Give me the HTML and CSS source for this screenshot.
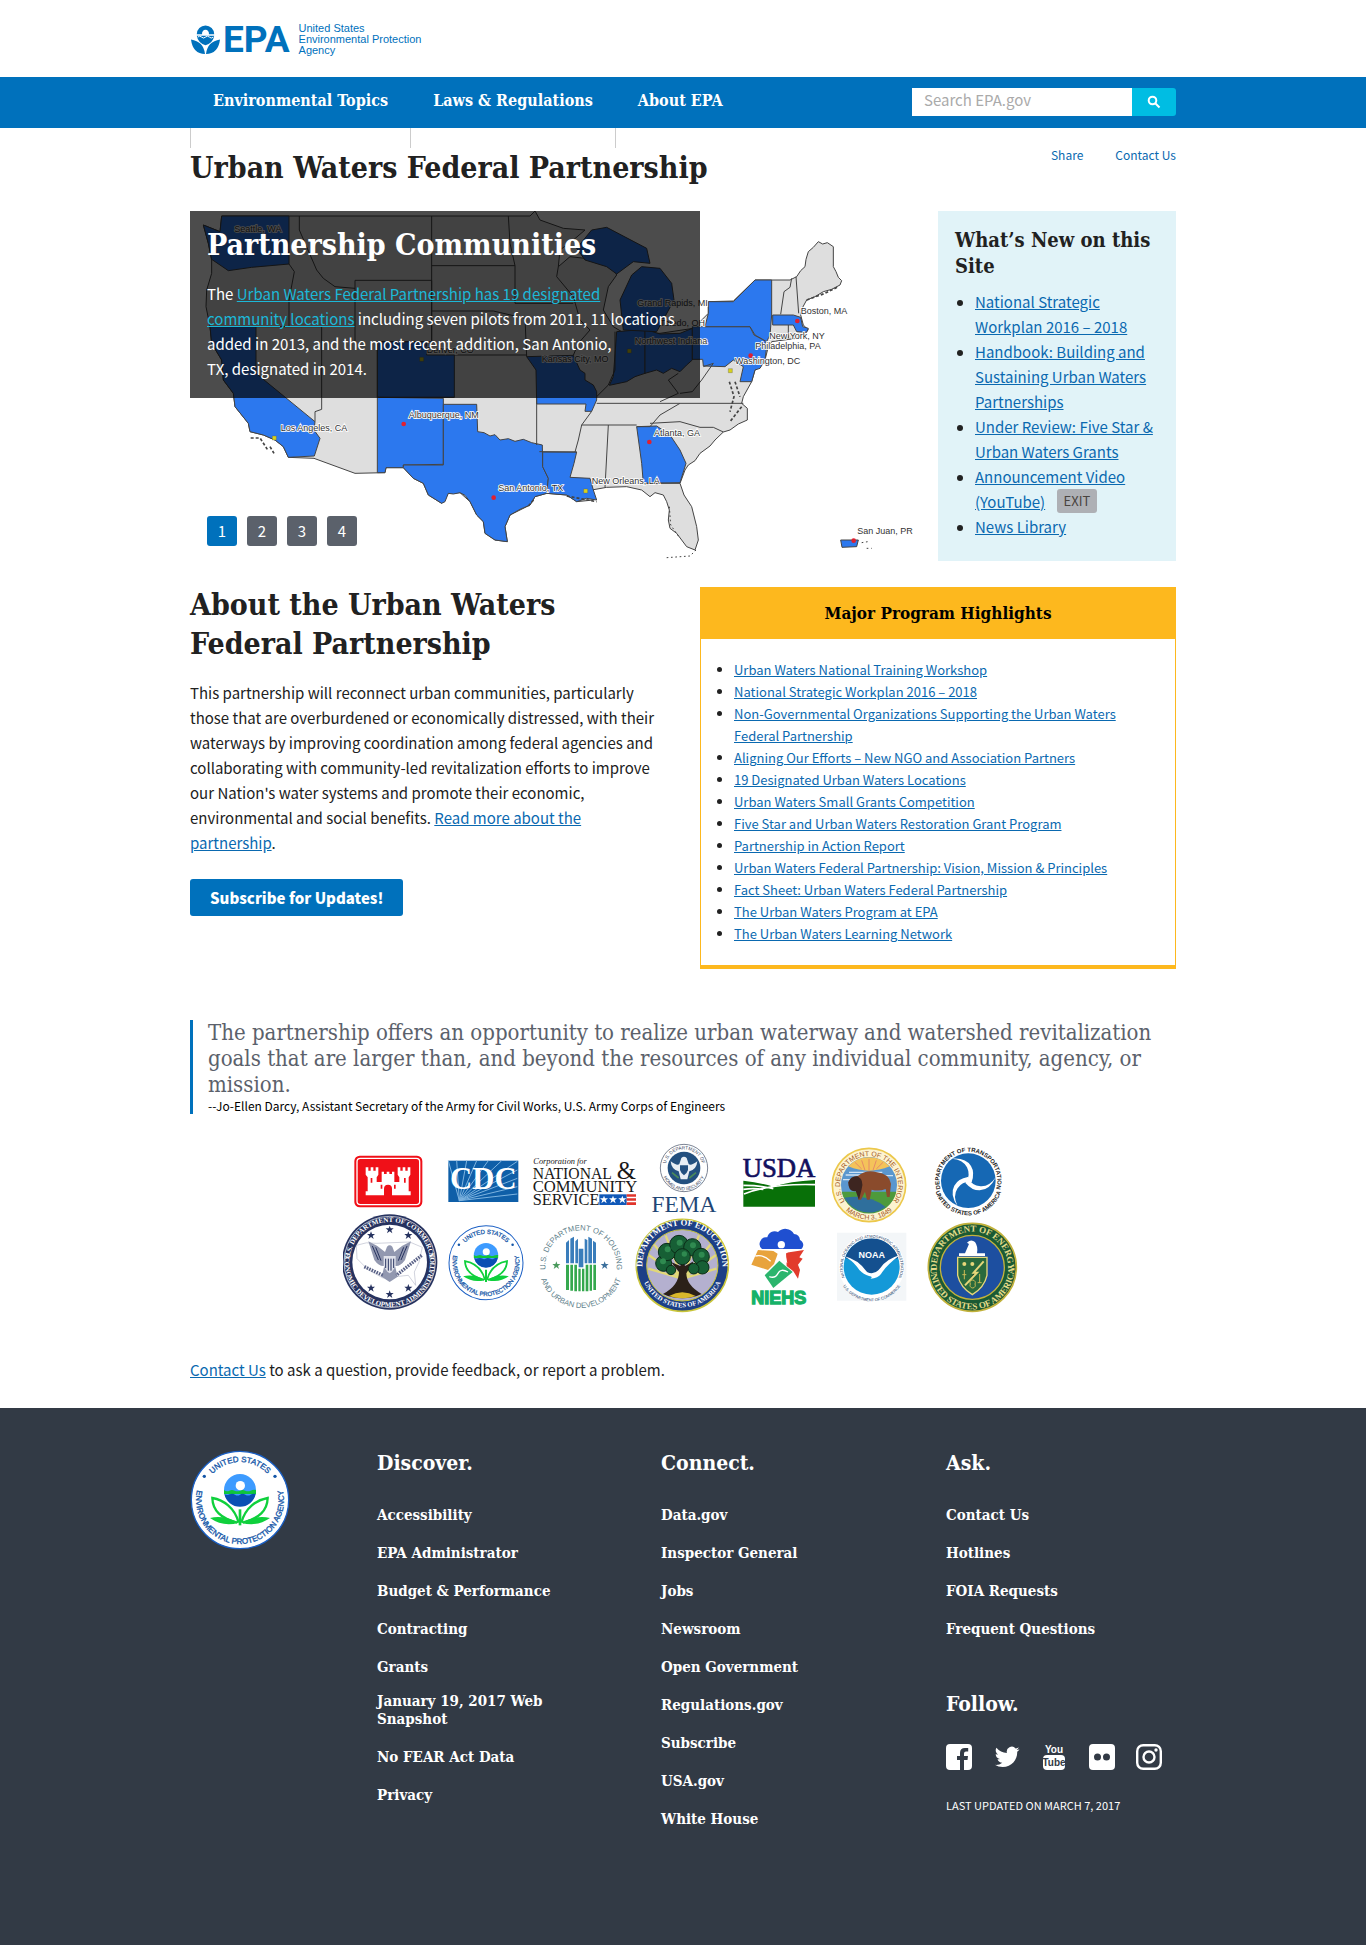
FILE: index.html
```html
<!DOCTYPE html>
<html lang="en">
<head>
<meta charset="utf-8">
<meta name="viewport" content="width=device-width, initial-scale=1">
<title>Urban Waters Federal Partnership | US EPA</title>
<link rel="stylesheet" href="styles.css">
</head>
<body>
<svg class="defs" aria-hidden="true">
  <defs>
    <path id="seal-top" d="M0 114A114 114 0 0 1 0 -114A114 114 0 0 1 0 114"/>
    <path id="seal-bottom" d="M0 -132A132 132 0 0 0 0 132A132 132 0 0 0 0 -132"/>
    <symbol id="epa-seal" viewBox="-150 -150 300 300">
      <circle r="146" fill="#fff" stroke="#1a5fc4" stroke-width="4"/>
      <g font-family="Liberation Sans, sans-serif" font-size="24" fill="#1456a8" stroke="#1456a8" stroke-width="1" text-anchor="middle">
        <text><textPath href="#seal-top" startOffset="50%">UNITED STATES</textPath></text>
        <text><textPath href="#seal-bottom" startOffset="50%">ENVIRONMENTAL PROTECTION AGENCY</textPath></text>
      </g>
      <circle cx="-107" cy="-71" r="5" fill="#1456a8"/><circle cx="105" cy="-71" r="5" fill="#1456a8"/>
      <circle cy="-30" r="48" fill="#3d9bff"/>
      <path d="M-48 -30q8 6 16 2t16 0 16 0 16 0 16 0 16 -2v12H-48z" fill="#0fc43c"/>
      <path d="M-47 -18q8 5 16 1t16 1 15 0 16 0 16 0 15 -2A48 48 0 0 1 -47 -18z" fill="#0a4fb3"/>
      <circle cx="1" cy="-43" r="14" fill="#fff"/>
      <path d="M0 28V76" stroke="#0fd03c" stroke-width="8"/>
      <path d="M-4 68C-16 22 -50 0 -83 -6C-82 32 -58 54 -8 68M4 68C16 22 50 0 83 -6C82 32 58 54 8 68" fill="none" stroke="#0fd03c" stroke-width="7"/>
      <path d="M-90 54Q-50 44 -4 68Q-50 82 -90 54zM90 54Q50 44 4 68Q50 82 90 54z" fill="#0fd03c"/>
    </symbol>
  </defs>
</svg>

<header class="masthead">
  <div class="wrap">
    <a class="brand" href="#" aria-label="US EPA">
      <svg class="brand-mark" viewBox="0 0 30 32" aria-hidden="true">
        <path d="M6 10.500A9 9 0 0 1 24 10.500H18.500A3.600 3.600 0 1 0 11.500 10.500z"/>
        <path d="M6 12h18q-1 7 -9 10q-8 -3 -9 -10z"/>
        <path d="M7 13.500q2 -2 4 0t4 0 4 0 4 0" fill="none" stroke="#fff" stroke-width="1"/>
        <path d="M0 16Q13 18 14.500 31Q2 31 0 16zM30 16Q17 18 15.500 31Q28 31 30 16z"/>
      </svg>
      <span class="brand-name">EPA</span>
      <span class="brand-full">United States<br>Environmental Protection<br>Agency</span>
    </a>
  </div>
</header>

<nav class="nav" aria-label="Main">
  <div class="wrap nav-row">
    <ul class="nav-list">
      <li><a href="#">Environmental Topics</a></li>
      <li><a href="#">Laws &amp; Regulations</a></li>
      <li><a href="#">About EPA</a></li>
    </ul>
    <form class="search">
      <input class="search-box" type="search" placeholder="Search EPA.gov" aria-label="Search EPA.gov">
      <button class="search-button" type="button" aria-label="Search">
        <svg viewBox="0 0 14 14" aria-hidden="true"><circle cx="5.500" cy="5.500" r="3.800"/><path d="M8.500 8.500L12.500 12.500"/></svg>
      </button>
    </form>
  </div>
</nav>

<main class="wrap">
  <div class="title-row">
    <h1>Urban Waters Federal Partnership</h1>
    <ul class="page-links">
      <li><a href="#">Share</a></li>
      <li><a href="#">Contact Us</a></li>
    </ul>
  </div>

  <div class="top-grid">
    <section class="hero">
      <svg class="map" viewBox="30 33 2172 1050" role="img" aria-label="Map of partnership communities">
        <g stroke="#444" stroke-width="3" stroke-linejoin="round">
          <path fill="#dedede" d="M70 75L120 95 125 48H1050L1065 33 1080 60 1150 85 1215 90 1180 120 1140 150 1135 200 1170 170 1215 175 1300 200 1310 225 1285 260 1270 330 1300 380 1325 395 1440 400 1540 385 1585 340 1585 305 1660 303 1725 240H1830L1850 230 1862 212 1875 200 1878 178 1885 155 1900 142 1915 125 1928 132 1942 128 1960 140V200L1968 215 1975 232 1985 242 1980 255 1955 268 1930 275 1905 290 1880 300 1868 322 1862 345 1870 375 1885 390 1850 415 1775 425 1765 440 1755 480 1725 510 1715 545 1690 590 1685 610 1702 625 1702 660 1675 672 1650 690 1630 696 1605 720 1590 738 1560 760 1545 782 1525 795 1515 810 1500 850 1512 885 1535 920 1550 980 1555 1020 1545 1050 1520 1040 1505 1020 1490 1000 1470 985 1465 960 1468 930 1460 905 1450 885 1425 878 1410 890 1385 870 1340 860 1280 862 1235 870 1240 900 1190 905 1160 885 1100 880 1065 890 1050 915 990 945 975 980 982 1025 945 1020 915 1000 910 965 890 945 870 905 840 878 805 880 785 910 745 885 730 850 700 835 670 803H618L615 818 525 820 402 775 325 772 310 740 285 720 250 705 210 695 205 670 165 620 160 580 130 540 125 480 95 430 90 380 78 320 80 270 95 220V180L85 130z"/>
          <g fill="#2c78ee">
            <path d="M70 75L120 95 125 48H327V192L215 202 145 212 95 178 85 130z"/>
            <path d="M90 380H228V520L405 665 402 690 420 715 403 768 325 772 310 740 285 720 250 705 210 695 205 670 165 620 160 580 130 540 125 480 95 430z"/>
            <path d="M592 425H740V465H823V592H592z"/>
            <path d="M592 592L790 595V793L670 795V803H618L615 818H592z"/>
            <path d="M790 613H890L893 695 912 698 930 708 945 704 960 720 985 716 1005 724 1030 718 1055 728 1087 735 1088 800 1105 835 1100 880 1065 890 1050 915 1020 928 990 945 975 980 982 1025 945 1020 915 1000 910 965 890 945 870 905 855 886 840 878 820 882 805 880 795 905 785 910 745 885 730 850 700 835 670 803V795H790z"/>
            <path d="M1040 470L1180 466 1200 510 1215 520 1215 540 1240 555 1250 575V600L1235 634H1215L1218 612H1070L1068 510z"/>
            <path d="M1088 756H1190L1182 790 1170 832 1230 835 1240 870 1250 900 1220 895 1190 905 1160 885 1100 880 1105 835 1088 800z"/>
            <path d="M1310 395L1395 388V520L1365 530 1340 545 1288 556 1300 530z"/>
            <path d="M1395 388L1440 402 1500 400 1537 385V480L1520 495 1500 515 1475 505 1450 520 1430 510 1395 520z"/>
            <path d="M1537 380H1710L1722 405 1755 422 1760 440 1755 480 1740 505 1725 510 1715 545 1680 545 1690 500 1660 480 1635 500 1570 498 1568 478H1537z"/>
            <path d="M1330 390L1320 300 1355 225 1385 200 1440 205 1475 250 1482 300 1455 350 1430 395z"/>
            <path d="M1190 145L1235 90 1280 82 1400 145 1410 190 1360 185 1310 222 1280 200 1215 180z"/>
            <path d="M1585 340V305H1660L1725 240H1775V345L1770 405 1760 425 1725 405 1710 380H1575z"/>
            <path d="M1778 345H1840L1862 352 1868 380 1885 385 1880 397 1850 395 1840 375H1778z"/>
            <path d="M1370 680L1430 678 1470 705 1500 750 1518 790 1500 848 1390 850 1385 790z"/>
            <path d="M1982 1020H2035L2030 1040 1986 1042z"/>
          </g>
          <path fill="none" d="M358 48V90L410 210 430 235 465 260 525 265M327 192L343 215 327 300V380H228M327 380H425V592M425 592V628L405 635V665M525 241H755V425H592M525 241V425M755 48V425M755 197H1005M755 333H940L1035 355 1040 470M823 465H1040M592 425V592M592 592H823M985 48L990 130 1005 197V310H1180M1135 200L1130 230 1180 290 1200 360 1230 390 1195 430 1180 466M1305 395V510L1285 555 1250 590M1070 592V735M1078 755L1190 756M1235 634L1205 675 1195 720 1185 756M1205 675H1370M1285 675L1275 862M1250 610H1690M1370 680H1410L1440 645 1500 610M1410 670L1500 665 1560 682 1600 682 1630 696M1495 520L1465 540 1495 580 1440 605M1537 575L1500 580M1570 500L1600 490 1565 540 1537 575M1390 850H1500M1835 235L1830 262 1812 275 1802 343M1848 230L1856 340M1825 375V415"/>
          <path fill="none" stroke-width="5" stroke-dasharray="9 6" d="M212 714H240L262 748M270 740L282 760M1648 545L1662 590 1650 635M1665 545L1680 590M1685 620L1650 665M1880 300L1935 280 1975 260M1160 888L1250 905M1045 918L1064 896"/>
          <path fill="none" stroke-dasharray="5 8" d="M1468 920L1472 975 1500 1015M1460 1073L1530 1068 1548 1050M2045 1028L2070 1024M2060 1045H2075"/>
        </g>
        <g fill="#e02030"><circle cx="671" cy="672" r="7"/><circle cx="941" cy="893" r="7"/><circle cx="1408" cy="726" r="7"/><circle cx="1852" cy="363" r="7"/><circle cx="1712" cy="467" r="7"/><circle cx="2021" cy="1022" r="7"/></g>
        <g fill="#d8d21c" stroke="#555"><path d="M277 708h12v12h-12zM1211 867h12v12h-12zM1645 506h12v12h-12zM719 472h12v12h-12zM1342 447h12v12h-12z"/></g>
        <g class="map-labels">
          <text x="163" y="96">Seattle, WA</text>
          <text x="302" y="692">Los Angeles, CA</text>
          <text x="686" y="653">Albuquerque, NM</text>
          <text x="740" y="458">Denver, CO</text>
          <text x="955" y="873">San Antonio, TX</text>
          <text x="1085" y="486">Kansas City, MO</text>
          <text x="1235" y="853">New Orleans, LA</text>
          <text x="1422" y="708">Atlanta, GA</text>
          <text x="1372" y="318">Grand Rapids, MI</text>
          <text x="1440" y="377">Toledo, OH</text>
          <text x="1364" y="433">Northwest Indiana</text>
          <text x="1862" y="343">Boston, MA</text>
          <text x="1768" y="417">New York, NY</text>
          <text x="1726" y="448">Philadelphia, PA</text>
          <text x="1665" y="492">Washington, DC</text>
          <text x="2032" y="1002">San Juan, PR</text>
        </g>
      </svg>
      <div class="hero-text">
        <h2>Partnership Communities</h2>
        <p>The <a href="#">Urban Waters Federal Partnership has 19 designated community locations</a> including seven pilots from 2011, 11 locations added in 2013, and the most recent addition, San Antonio, TX,&nbsp;designated in 2014.</p>
      </div>
      <div class="pager">
        <button class="is-current" type="button">1</button>
        <button type="button">2</button>
        <button type="button">3</button>
        <button type="button">4</button>
      </div>
    </section>

    <aside class="news">
      <h3>What’s New on this Site</h3>
      <ul>
        <li><a href="#">National Strategic Workplan 2016 – 2018</a></li>
        <li><a href="#">Handbook: Building and Sustaining Urban Waters Partnerships</a></li>
        <li><a href="#">Under Review: Five Star &amp; Urban Waters Grants</a></li>
        <li><a href="#">Announcement Video (YouTube)</a> <a class="exit" href="#">EXIT</a></li>
        <li><a href="#">News Library</a></li>
      </ul>
    </aside>
  </div>

  <div class="mid-grid">
    <section class="about">
      <h2>About the Urban Waters Federal Partnership</h2>
      <p>This partnership will reconnect urban communities, particularly those that are overburdened or economically distressed, with their waterways by improving coordination among federal agencies and collaborating with community-led revitalization efforts to improve our Nation's water systems and promote their economic, environmental and social benefits. <a href="#">Read more about the partnership</a>.</p>
      <button class="subscribe" type="button">Subscribe for Updates!</button>
    </section>

    <section class="highlights">
      <h2>Major Program Highlights</h2>
      <ul>
        <li><a href="#">Urban Waters National Training Workshop</a></li>
        <li><a href="#">National Strategic Workplan 2016 – 2018</a></li>
        <li><a href="#">Non-Governmental Organizations Supporting the Urban Waters Federal Partnership</a></li>
        <li><a href="#">Aligning Our Efforts – New NGO and Association Partners</a></li>
        <li><a href="#">19 Designated Urban Waters Locations</a></li>
        <li><a href="#">Urban Waters Small Grants Competition</a></li>
        <li><a href="#">Five Star and Urban Waters Restoration Grant Program</a></li>
        <li><a href="#">Partnership in Action Report</a></li>
        <li><a href="#">Urban Waters Federal Partnership: Vision, Mission &amp; Principles</a></li>
        <li><a href="#">Fact Sheet: Urban Waters Federal Partnership</a></li>
        <li><a href="#">The Urban Waters Program at EPA</a></li>
        <li><a href="#">The Urban Waters Learning Network</a></li>
      </ul>
    </section>
  </div>

  <blockquote class="quote">
    <p>The partnership offers an opportunity to realize urban waterway and watershed revitalization goals that are larger than, and beyond the resources of any individual community, agency, or mission.</p>
    <cite>--Jo-Ellen Darcy, Assistant Secretary of the Army for Civil Works, U.S. Army Corps of Engineers</cite>
  </blockquote>

  <svg class="partners" viewBox="39 30 2040 520" role="img" aria-label="Federal partner agencies">
    <defs>
      <path id="b112" d="M0 -112A112 112 0 0 0 0 112A112 112 0 0 0 0 -112"/>
      <path id="t120" d="M0 120A120 120 0 0 1 0 -120A120 120 0 0 1 0 120"/>
      <path id="b135" d="M0 -135A135 135 0 0 0 0 135A135 135 0 0 0 0 -135"/>
      <path id="t107" d="M0 107A107 107 0 0 1 0 -107A107 107 0 0 1 0 107"/>
      <path id="b126" d="M0 -126A126 126 0 0 0 0 126A126 126 0 0 0 0 -126"/>
      <path id="t87" d="M0 87A87 87 0 0 1 0 -87A87 87 0 0 1 0 87"/>
      <path id="b104" d="M0 -104A104 104 0 0 0 0 104A104 104 0 0 0 0 -104"/>
      <path id="t56" d="M0 56A56 56 0 0 1 0 -56A56 56 0 0 1 0 56"/>
      <path id="b67" d="M0 -67A67 67 0 0 0 0 67A67 67 0 0 0 0 -67"/>
      <path id="star" d="M0 -12L3 -4 12 -4 5 2 8 11 0 5 -8 11 -5 2 -12 -4 -3 -4z"/>
    </defs>

    <!-- Army Corps of Engineers -->
    <rect x="73" y="77" width="204" height="155" rx="16" fill="#f01018"/>
    <rect x="81" y="85" width="188" height="139" rx="10" fill="none" stroke="#fff" stroke-width="4"/>
    <path fill="#fff" d="M107 112h8v10h7v-10h8v10h7v-10h8v22l-5 8v14h15v-31h7v7h8v-7h8v7h8v-7h7v31h15v-14l-5 -8v-22h8v10h7v-10h8v10h7v-10h8v22l-5 8v42h6v12H186v-20a12 12 0 0 0 -24 0v20H107v-12h6v-42l-6 -8z"/>
    <path fill="#f01018" d="M122 144h5v14h-5zM222 144h5v14h-5zM152 164h5v12h-5zM192 164h5v12h-5z"/>

    <!-- CDC -->
    <rect x="355" y="92" width="210" height="124" fill="#0f5fa8"/>
    <path stroke="#7db4e0" stroke-width="3" d="M388 212L355 92M388 212L380 92M388 212L410 92M388 212L440 92M388 212L475 92M388 212L515 92M388 212L562 94M388 212L562 120M388 212L562 145M388 212L562 170M388 212L562 192"/>
    <text x="460" y="178" text-anchor="middle" font-family="Liberation Serif, serif" font-weight="bold" font-size="92" fill="#fff">CDC</text>

    <!-- National and Community Service -->
    <g font-family="Liberation Serif, serif" fill="#181818">
      <text x="610" y="103" font-size="25" font-style="italic">Corporation for</text>
      <text x="608" y="146" font-size="47">NATIONAL</text>
      <text x="860" y="146" font-size="74">&amp;</text>
      <text x="608" y="186" font-size="50">COMMUNITY</text>
      <text x="608" y="225" font-size="49">SERVICE</text>
    </g>
    <path fill="#1058b8" d="M808 193h82v32h-82z"/><path fill="#e0342b" d="M890 193h28v7h-28zM890 205h28v7h-28zM890 217h28v8h-28z"/>
    <g fill="#fff"><use href="#star" x="822" y="209"/><use href="#star" x="849" y="209"/><use href="#star" x="877" y="209"/></g>

    <!-- FEMA -->
    <g transform="translate(1062 114)">
      <circle r="71" fill="#fff" stroke="#7b8494" stroke-width="3"/>
      <g font-family="Liberation Sans, sans-serif" font-size="14" fill="#3a4660" text-anchor="middle">
        <text><textPath href="#t56" startOffset="50%">U.S. DEPARTMENT OF</textPath></text>
        <text><textPath href="#b67" startOffset="50%">HOMELAND SECURITY</textPath></text>
      </g>
      <circle r="49" fill="#23507f"/>
      <path fill="#e8eef4" d="M-40 -20Q-20 -5 -14 -12L-8 -30Q0 -38 8 -30L14 -12Q20 -5 40 -20Q38 5 16 10L10 34H-10L-16 10Q-38 5 -40 -20z"/>
      <path fill="#23507f" d="M-12 -8h24v14q-4 12 -12 16q-8 -4 -12 -16z"/>
      <path stroke="#4a8a5a" stroke-width="5" d="M-36 14L-16 30M36 14L16 30"/>
    </g>
    <text x="1062" y="245" text-anchor="middle" font-family="Liberation Serif, serif" font-size="70" fill="#1f4675">FEMA</text>

    <!-- USDA -->
    <text x="1347" y="142" text-anchor="middle" font-family="Liberation Serif, serif" font-size="80" stroke="#12105e" stroke-width="2" fill="#12105e">USDA</text>
    <path fill="#087008" d="M1240 152Q1290 158 1330 170Q1380 154 1455 150V230H1240z"/>
    <path fill="none" stroke="#fff" stroke-width="5" d="M1240 166Q1290 166 1330 176M1242 192Q1320 160 1455 164M1240 178Q1270 174 1300 178"/>

    <!-- Department of the Interior -->
    <g transform="translate(1617 165)">
      <circle r="110" fill="#fdf3d0" stroke="#ecc84c" stroke-width="5"/>
      <circle r="84" fill="#5a97cf"/>
      <path fill="#f4c35a" d="M-62 -56A84 84 0 0 1 62 -56Q0 -30 -62 -56z"/>
      <path stroke="#e58b66" stroke-width="3" d="M0 -42V-78M-12 -44L-22 -74M12 -44L22 -74M-22 -48L-42 -68M22 -48L42 -68"/>
      <path stroke="#cfe2f3" stroke-width="4" d="M-70 -30H-20M-60 -38H40M20 -28H72M-78 -16H-50"/>
      <path fill="#4e9a3c" d="M-82 20H82A84 84 0 0 1 -82 20z"/>
      <path fill="#2f6f9c" d="M-74 38Q0 26 50 66A84 84 0 0 1 -74 38z"/>
      <path fill="#8a4b2c" d="M-62 -8Q-54 -28 -34 -26Q-8 -48 24 -38Q60 -34 66 -4L62 36H54L50 12Q30 20 8 14L2 44H-6L-12 20L-24 44H-32L-36 18Q-60 22 -62 -8z"/>
      <path fill="#3d2520" d="M-62 -8Q-54 -28 -34 -26Q-14 -14 -22 12L-30 44L-40 18Q-62 22 -62 -8z"/>
      <g font-family="Liberation Sans, sans-serif" font-size="21" fill="#a2581f" text-anchor="middle">
        <text><textPath href="#t87" startOffset="50%">U.S. DEPARTMENT OF THE INTERIOR</textPath></text>
        <text><textPath href="#b104" startOffset="50%">MARCH 3, 1849</textPath></text>
      </g>
    </g>

    <!-- Department of Transportation -->
    <g transform="translate(1915 152)">
      <circle r="82" fill="#1668b4"/>
      <g id="blade" fill="#fff"><path d="M-8 8Q8 -16 -4 -40Q-16 -64 -50 -66Q-8 -70 8 -44Q20 -24 10 4z"/></g>
      <use href="#blade" transform="rotate(120)"/><use href="#blade" transform="rotate(240)"/>
      <g font-family="Liberation Sans, sans-serif" font-weight="bold" font-size="18" fill="#222" text-anchor="middle">
        <text><textPath href="#t87" startOffset="50%">DEPARTMENT OF TRANSPORTATION</textPath></text>
        <text><textPath href="#b104" startOffset="50%">UNITED STATES OF AMERICA</textPath></text>
      </g>
    </g>

    <!-- Economic Development Administration -->
    <g transform="translate(179 396)">
      <circle r="143" fill="#26325f"/><circle r="137" fill="none" stroke="#fff" stroke-width="2"/>
      <circle r="112" fill="#fff"/>
      <g font-family="Liberation Serif, serif" font-weight="bold" font-size="21" fill="#fff" text-anchor="middle">
        <text><textPath href="#t120" startOffset="50%">U.S. DEPARTMENT OF COMMERCE</textPath></text>
        <text><textPath href="#b135" startOffset="50%">ECONOMIC DEVELOPMENT ADMINISTRATION</textPath></text>
      </g>
      <path fill="none" stroke="#b9bccb" stroke-width="2" d="M-100 -50Q-70 -62 -40 -56L60 -60 98 -44 88 0 74 30 78 70 56 40 -20 48 -64 24 -98 -10z"/>
      <path fill="#9298b0" d="M-64 -62L-46 -6Q-32 14 -16 12L-24 44L0 60L24 44L16 12Q32 14 46 -6L64 -62Q36 -50 14 -30L8 -46Q0 -54 -8 -46L-14 -30Q-36 -50 -64 -62z"/>
      <path fill="#dfe1ea" d="M-18 -18h36v28q-6 18 -18 24q-12 -6 -18 -24z"/>
      <path stroke="#26325f" stroke-width="3" d="M-12 -10V18M-4 -10V26M4 -10V26M12 -10V18M-52 -48L-34 -6M-42 -44L-26 -4M52 -48L34 -6M42 -44L26 -4"/>
      <path stroke="#5b6388" stroke-width="10" stroke-dasharray="5 3" d="M-76 14L-20 40M96 -20L20 40"/>
      <g fill="#26325f"><use href="#star" y="-97"/><use href="#star" x="-56" y="-80"/><use href="#star" x="56" y="-80"/><use href="#star" x="-56" y="78"/><use href="#star" x="56" y="78"/><use href="#star" y="97"/></g>
    </g>

    <!-- EPA -->
    <use href="#epa-seal" x="354" y="284" width="228" height="228"/>

    <!-- Housing and Urban Development -->
    <g transform="translate(753 408)">
      <g font-family="Liberation Sans, sans-serif" font-size="23" fill="#5f7f8c" text-anchor="middle">
        <text><textPath href="#t107" startOffset="50%">U.S. DEPARTMENT OF HOUSING</textPath></text>
        <text><textPath href="#b126" startOffset="50%">AND URBAN DEVELOPMENT</textPath></text>
      </g>
      <path fill="#3a7dbb" d="M-45 -70l9 -8V-8h-9zM-32 -82l11 -6V-8h-11zM-17 -74l8 -8V-8h-8zM-7 -52h14V4H-7zM11 -82l8 4V-8h-8zM22 -88l11 6V-8H22zM36 -76l9 6V-8h-9z"/>
      <path fill="#35a84e" d="M-45 -4h9v76h-9zM-32 -4h8v78h-8zM-20 -4h8v80h-8zM-8 8h7v68h-7zM3 8h7v68H3zM14 -4h8v80h-8zM26 -4h7v78h-7zM37 -4h8v76h-8z"/>
      <use href="#star" x="-74" y="-2" fill="#4a9a5c"/><use href="#star" x="71" y="-2" fill="#3c6f9c"/>
    </g>

    <!-- Department of Education -->
    <g transform="translate(1057 406)">
      <circle r="138" fill="#1d3f86" stroke="#c9c53a" stroke-width="5"/>
      <circle r="107" fill="#b4b0cf" stroke="#c9c53a" stroke-width="3"/>
      <path stroke="#e2d878" stroke-width="7" d="M0 40L-100 -30M0 40L-84 -62M0 40L-50 -90M0 40L50 -90M0 40L84 -62M0 40L100 -30M0 40L-102 10M0 40L102 10"/>
      <path fill="#2b2018" d="M-58 86Q-10 60 -10 20L-34 -10 -6 2 0 -30 8 2 34 -12 12 24Q12 60 58 86Q0 112 -58 86z"/>
      <g fill="#175f35" stroke="#0b2b18" stroke-width="3"><circle cx="-56" cy="-6" r="24"/><circle cx="-46" cy="-40" r="26"/><circle cx="-10" cy="-62" r="28"/><circle cx="30" cy="-54" r="26"/><circle cx="56" cy="-26" r="25"/><circle cx="60" cy="6" r="20"/><circle cx="0" cy="-26" r="24"/><circle cx="-34" cy="14" r="14"/><circle cx="34" cy="10" r="16"/></g>
      <g fill="#2f8a50"><circle cx="-58" cy="-12" r="9"/><circle cx="-44" cy="-48" r="9"/><circle cx="-8" cy="-68" r="9"/><circle cx="32" cy="-60" r="9"/><circle cx="58" cy="-32" r="9"/><circle cx="6" cy="-34" r="8"/></g>
      <path fill="#d9b72c" d="M-40 92Q0 70 40 92Q0 106 -40 92z"/>
      <g font-family="Liberation Serif, serif" font-weight="bold" fill="#fff" text-anchor="middle">
        <text font-size="26"><textPath href="#t120" startOffset="50%">DEPARTMENT OF EDUCATION</textPath></text>
        <text font-size="20"><textPath href="#b126" startOffset="50%">UNITED STATES OF AMERICA</textPath></text>
      </g>
    </g>

    <!-- NIEHS -->
    <path fill="#1f4fd0" d="M1296 357A20 20 0 0 1 1312 322A22 22 0 0 1 1344 306A30 30 0 0 1 1392 312A20 20 0 0 1 1410 330A16 16 0 0 1 1414 357z"/>
    <path fill="#e8a33c" d="M1284 360L1346 364L1332 402L1314 420L1264 404z"/>
    <path fill="#e23b2c" d="M1368 368L1422 360L1408 382 1418 386 1404 404 1410 420 1404 446 1390 424 1370 408z"/>
    <path fill="#2bb56d" d="M1304 436L1348 392 1388 426 1330 474z"/>
    <path fill="none" stroke="#fff" stroke-width="4" d="M1276 378Q1300 372 1322 394M1318 440Q1336 446 1344 430T1374 426"/>
    <circle cx="1354" cy="344" r="11" fill="#fff"/><path fill="#fff" d="M1322 358H1386L1366 372 1372 400 1354 384 1338 400 1344 372z"/>
    <text x="1346" y="523" text-anchor="middle" font-family="Liberation Sans, sans-serif" font-weight="bold" font-size="54" stroke="#16b268" stroke-width="4" fill="#16b268">NIEHS</text>

    <!-- NOAA -->
    <g transform="translate(1625 410)">
      <path fill="#f3f6f8" d="M-104 -102H104V102H-104z"/>
      <circle r="98" fill="#fff"/>
      <circle r="84" fill="#1499d8"/>
      <path fill="#14508f" d="M-80 -26A84 84 0 0 1 80 -26Q44 -18 12 24Q-4 30 -20 20Q-44 -18 -80 -26z"/>
      <path fill="#fff" d="M-84 -32Q-40 -22 -14 16Q8 28 26 4Q46 -24 84 -34Q44 -4 28 22Q20 34 -4 36Q6 30 -8 28Q-30 22 -44 0Q-60 -20 -84 -32z"/>
      <text y="-27" text-anchor="middle" font-family="Liberation Sans, sans-serif" font-weight="bold" font-size="27" fill="#fff">NOAA</text>
      <g font-family="Liberation Sans, sans-serif" font-size="12" fill="#22406a" text-anchor="middle">
        <text><textPath href="#t87" startOffset="50%">NATIONAL OCEANIC AND ATMOSPHERIC ADMINISTRATION</textPath></text>
        <text><textPath href="#b104" startOffset="50%">U.S. DEPARTMENT OF COMMERCE</textPath></text>
      </g>
    </g>

    <!-- Department of Energy -->
    <g transform="translate(1927 412)">
      <circle r="132" fill="#1a5a34" stroke="#c2b23c" stroke-width="5"/>
      <circle r="96" fill="#1d4fa0" stroke="#c2b23c" stroke-width="4"/>
      <path fill="#2a6a3c" stroke="#e6d67a" stroke-width="4" d="M-44 -30H44V24Q36 60 0 82Q-36 60 -44 24z"/>
      <path fill="#fff" d="M-40 -34H38V-42H14Q18 -62 8 -76Q-4 -86 -16 -74L-10 -70L-22 -42H-40z"/>
      <path stroke="#e6d67a" stroke-width="6" d="M34 -18L4 16H14L-22 54"/>
      <path fill="none" stroke="#cdbb55" stroke-width="3" d="M-24 8V36M-30 22H-18M22 20V46M16 46H28M-6 50A8 8 0 1 0 8 50A8 8 0 1 0 -6 50"/>
      <circle cx="-24" cy="-10" r="6" fill="#e6d67a"/><circle cx="0" cy="-10" r="6" fill="#e6d67a"/>
      <g font-family="Liberation Serif, serif" font-weight="bold" font-size="27" fill="#e6dc8a" text-anchor="middle">
        <text><textPath href="#t107" startOffset="50%">DEPARTMENT OF ENERGY</textPath></text>
        <text><textPath href="#b126" startOffset="50%">UNITED STATES OF AMERICA</textPath></text>
      </g>
    </g>
  </svg>

  <p class="contact"><a href="#">Contact Us</a> to ask a question, provide feedback, or report a problem.</p>
</main>

<footer class="footer">
  <div class="wrap footer-grid">
    <svg class="footer-seal" viewBox="0 0 300 300" role="img" aria-label="United States Environmental Protection Agency"><use href="#epa-seal" width="300" height="300"/></svg>
    <section>
      <h2>Discover.</h2>
      <ul>
        <li><a href="#">Accessibility</a></li>
        <li><a href="#">EPA Administrator</a></li>
        <li><a href="#">Budget &amp; Performance</a></li>
        <li><a href="#">Contracting</a></li>
        <li><a href="#">Grants</a></li>
        <li><a href="#">January 19, 2017 Web Snapshot</a></li>
        <li><a href="#">No FEAR Act Data</a></li>
        <li><a href="#">Privacy</a></li>
      </ul>
    </section>
    <section>
      <h2>Connect.</h2>
      <ul>
        <li><a href="#">Data.gov</a></li>
        <li><a href="#">Inspector General</a></li>
        <li><a href="#">Jobs</a></li>
        <li><a href="#">Newsroom</a></li>
        <li><a href="#">Open Government</a></li>
        <li><a href="#">Regulations.gov</a></li>
        <li><a href="#">Subscribe</a></li>
        <li><a href="#">USA.gov</a></li>
        <li><a href="#">White House</a></li>
      </ul>
    </section>
    <section>
      <h2>Ask.</h2>
      <ul>
        <li><a href="#">Contact Us</a></li>
        <li><a href="#">Hotlines</a></li>
        <li><a href="#">FOIA Requests</a></li>
        <li><a href="#">Frequent Questions</a></li>
      </ul>
      <h2 class="follow">Follow.</h2>
      <div class="social">
        <a href="#" aria-label="Facebook"><svg viewBox="0 0 26 26"><path fill-rule="evenodd" d="M4 0H22a4 4 0 0 1 4 4V22a4 4 0 0 1 -4 4H18V16h3.500l.500 -4H18V9.500q0 -2 2 -2h2.200V4H19q-5 0 -5 5v3H11v4h3v10H4a4 4 0 0 1 -4 -4V4a4 4 0 0 1 4 -4z"/></svg></a>
        <a href="#" aria-label="Twitter"><svg viewBox="0 0 26 26"><path d="M25.500 5.200q-1.300 .6 -2.900 .8q1.600 -1 2.200 -2.800q-1.500 .9 -3.200 1.200a5.100 5.100 0 0 0 -8.700 4.700Q6.500 8.800 2.400 3.800a5.100 5.100 0 0 0 1.600 6.800q-1.200 0 -2.300 -.6q0 4 4.100 5.100q-1.100 .3 -2.300 .1q1.200 3.400 4.800 3.500Q5 21.300 .8 20.800q3.600 2.300 7.900 2.300c9.400 0 14.900 -8 14.500 -15.300q1.300 -1 2.300 -2.600z"/></svg></a>
        <a href="#" aria-label="YouTube"><svg viewBox="0 0 26 26"><rect x="2" y="11" width="22" height="15" rx="4"/><text x="13" y="9" text-anchor="middle" class="yt-text">You</text><text x="13" y="22" text-anchor="middle" class="yt-text yt-dark">Tube</text></svg></a>
        <a href="#" aria-label="Flickr"><svg viewBox="0 0 26 26"><path fill-rule="evenodd" d="M4 0H22a4 4 0 0 1 4 4V22a4 4 0 0 1 -4 4H4a4 4 0 0 1 -4 -4V4a4 4 0 0 1 4 -4zM8.500 9.500a3.500 3.500 0 1 0 0 7a3.500 3.500 0 1 0 0 -7zM17.500 9.500a3.500 3.500 0 1 0 0 7a3.500 3.500 0 1 0 0 -7z"/></svg></a>
        <a href="#" aria-label="Instagram"><svg viewBox="0 0 26 26"><g fill="none" stroke="#fff" stroke-width="2.400"><rect x="1.200" y="1.200" width="23.600" height="23.600" rx="6"/><circle cx="13" cy="13" r="5.500"/></g><circle cx="20" cy="6" r="1.700"/></svg></a>
      </div>
      <p class="updated">LAST UPDATED ON MARCH 7, 2017</p>
    </section>
  </div>
</footer>
</body>
</html>
```
FILE: styles.css
```css
:root {
  --sans: "Noto Sans CJK SC", "Noto Sans", sans-serif;
  --serif: "DejaVu Serif Condensed", "Liberation Serif", serif;
  --blue: #0071bc;
  --link: #0a69b0;
  --ink: #212121;
}

* { box-sizing: border-box; }

body {
  margin: 0;
  background: #fff;
  color: var(--ink);
  font: 15px/25px var(--sans);
}

h1, h2, h3, p, ul, blockquote { margin: 0; padding: 0; }
h1, h2, h3 { font-family: var(--serif); font-weight: bold; }
h1, h2 { font-size: 30px; line-height: 39px; }
a { color: var(--link); }
button, input { font-family: inherit; border: 0; }

.defs { display: block; width: 0; height: 0; }
.wrap { max-width: 986px; margin: 0 auto; }

/* Masthead */
.masthead { padding: 24px 0 22px; }
.brand { display: flex; align-items: center; height: 31px; color: var(--blue); text-decoration: none; }
.brand-mark { width: 31px; height: 31px; margin-right: 2px; fill: var(--blue); }
.brand-name { font: bold 37px/31px "Liberation Sans Narrow", Roboto, sans-serif; }
.brand-full { margin-left: 9px; font: 11px/11px "Liberation Sans", sans-serif; }

/* Main navigation */
.nav { background: var(--blue); height: 51px; }
.nav-row { display: flex; justify-content: space-between; align-items: flex-start; }
.nav-list { display: flex; list-style: none; }
.nav-list li { height: 71px; border-left: 1px solid #ccc; border-image: linear-gradient(var(--blue) 51px, #ccc 51px) 1; }
.nav-list a { display: block; padding: 12px 22px; color: #fff; font: bold 16px/24px var(--serif); text-decoration: none; }
.search { display: flex; margin-top: 11px; }
.search-box { width: 220px; height: 28px; padding: 0 12px 6px; background: #fff; border-radius: 0; font-size: 15px; appearance: none; }
.search-box::placeholder { color: #aaa; }
.search-button { width: 44px; height: 28px; padding: 0; background: #00bde3; border-radius: 0 3px 3px 0; }
.search-button svg { display: block; width: 14px; height: 14px; margin: 0 auto; fill: none; stroke: #fff; stroke-width: 2; }

/* Page title */
.title-row { display: flex; justify-content: space-between; padding: 20px 0 24px; }
.page-links { display: flex; gap: 32px; list-style: none; font-size: 12px; line-height: 14px; }
.page-links a { text-decoration: none; }

/* Map banner and news */
.top-grid { display: grid; grid-template-columns: minmax(0, 1fr) 238px; gap: 24px; }
.hero { position: relative; }
.map { display: block; width: 100%; }
.map-labels { font: 27px "Liberation Sans", sans-serif; fill: #333; stroke: #fff; stroke-width: 5; paint-order: stroke; }
.hero-text { position: absolute; top: 0; left: 0; width: 510px; max-width: 100%; padding: 14px 18px 17px 17px; background: rgba(0, 0, 0, .7); color: #fff; }
.hero-text h2 { margin-bottom: 17px; }
.hero-text a { color: #1cb8d8; }
.pager { position: absolute; left: 17px; bottom: 15px; display: flex; gap: 10px; }
.pager button { width: 30px; height: 30px; padding: 0; border-radius: 3px; background: #5b616b; color: #fff; font-size: 15px; line-height: 30px; }
.pager .is-current { background: var(--blue); }

.news { padding: 16px 16px 18px 17px; background: #e1f3f8; }
.news h3 { margin-bottom: 10px; font-size: 20px; line-height: 26px; }
.news ul { padding-left: 20px; }
.exit { display: inline-block; margin-left: 8px; padding: 0 7px; border-radius: 3px; background: #aeb0b5; color: #494440; font-size: 13px; line-height: 24px; text-decoration: none; vertical-align: top; }

/* About and highlights */
.mid-grid { display: grid; grid-template-columns: 1fr 1fr; gap: 34px; padding-top: 26px; }
.about h2 { margin: -2px 0 17px; }
.about p { margin-bottom: 24px; }
.subscribe { height: 37px; padding: 0 20px; border-radius: 3px; background: var(--blue); color: #fff; font-size: 15px; font-weight: 900; }
.highlights { border: 1px solid #fdb81e; border-bottom-width: 4px; }
.highlights h2 { padding: 13px; background: #fdb81e; color: #000; font-size: 17px; line-height: 25px; text-align: center; }
.highlights ul { padding: 20px 32px 20px 33px; font-size: 13px; line-height: 22px; }

/* Quote */
.quote { margin-top: 51px; padding-left: 15px; border-left: 3px solid var(--blue); }
.quote p { color: #5b616b; font: 22px/26px var(--serif); }
.quote cite { display: block; color: #000; font-size: 12px; font-style: normal; line-height: 16px; }

.partners { display: block; width: 680px; max-width: 100%; margin: 26px auto 0; }
.contact { padding: 44px 0 26px; }

/* Footer */
.footer { background: #323a45; color: #fff; padding: 42px 0 107px; }
.footer-grid { display: grid; grid-template-columns: 187px 284px 285px 1fr; }
.footer-seal { width: 100px; height: 100px; }
.footer h2 { font-size: 21px; line-height: 26px; margin-bottom: 20px; }
.footer ul { list-style: none; max-width: 190px; font: bold 15px/18px var(--serif); }
.footer li { display: flex; align-items: flex-end; min-height: 38px; padding: 6px 0 10px; }
.footer li a { color: #fff; text-decoration: none; }
.footer .follow { margin: 43px 0 27px; }
.social { display: flex; justify-content: space-between; width: 216px; }
.social svg { display: block; width: 26px; height: 26px; fill: #fff; }
.yt-text { font: bold 10px "Liberation Sans Narrow", "Liberation Sans", sans-serif; fill: #fff; }
.yt-dark { fill: #323a45; }
.updated { margin-top: 23px; font-size: 11px; }
```
